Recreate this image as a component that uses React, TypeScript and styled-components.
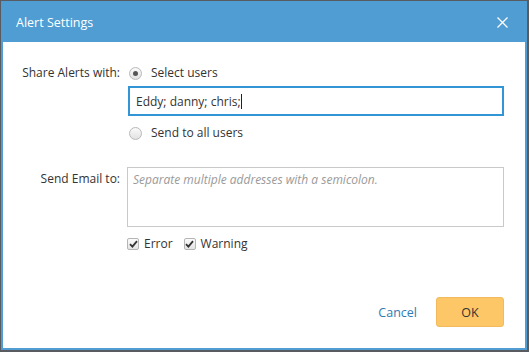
import React from "react";
import styled, { createGlobalStyle } from "styled-components";

const GlobalStyle = createGlobalStyle`
  html, body {
    margin: 0;
    padding: 0;
    background: #585c60;
    height: 352px;
    overflow: hidden;
  }
  body {
    font-family: "Open Sans", "Liberation Sans", sans-serif;
    font-size: 12px;
    color: #333;
  }
`;

const Dialog = styled.div`
  box-sizing: border-box;
  margin: 1px 0 0 1px;
  width: 526px;
  height: 349px;
  border: 2px solid #4f9dd2;
  background: #fff;
  display: flex;
  flex-direction: column;
`;

const Header = styled.div`
  height: 39px;
  background: #4f9dd2;
  display: flex;
  align-items: center;
  justify-content: space-between;
  padding: 0 17px 0 13px;
  color: #fff;
  font-size: 12.5px;
`;

const CloseButton = styled.button`
  border: 0;
  background: none;
  padding: 0;
  width: 11px;
  height: 11px;
  display: flex;
  cursor: pointer;
`;

const Content = styled.div`
  flex: 1;
  display: grid;
  grid-template-columns: 117px 1fr;
  column-gap: 7px;
  align-content: start;
  padding: 22px 21px 0 0;
`;

const Label = styled.div<{ $top?: number }>`
  text-align: right;
  line-height: 18px;
  padding-top: ${(p) => p.$top ?? 0}px;
`;

const Field = styled.div<{ $top?: number }>`
  display: flex;
  flex-direction: column;
  margin-top: ${(p) => p.$top ?? 0}px;
`;

const Option = styled.label`
  display: flex;
  align-items: center;
  gap: 9px;
  height: 18px;
  line-height: 18px;
  margin-left: 1px;
`;

const Radio = styled.span<{ $checked?: boolean }>`
  box-sizing: border-box;
  width: 13px;
  height: 13px;
  border-radius: 50%;
  border: 1px solid #b9b9b9;
  background: linear-gradient(#fafafa, #e2e2e2);
  display: flex;
  align-items: center;
  justify-content: center;
  margin-left: 1px;
  &::after {
    content: "";
    width: 5px;
    height: 5px;
    border-radius: 50%;
    background: ${(p) => (p.$checked ? "#555" : "transparent")};
  }
`;

const TextInput = styled.div`
  box-sizing: border-box;
  height: 30px;
  margin: 4px 0 8px 1px;
  border: 2px solid #3195d6;
  display: flex;
  align-items: center;
  padding: 0 6px;
  color: #333;
`;

const Caret = styled.span`
  display: inline-block;
  width: 1px;
  height: 15px;
  background: #222;
  vertical-align: middle;
`;

const TextArea = styled.div`
  box-sizing: border-box;
  height: 60px;
  border: 1px solid #c9c9c9;
  padding: 3px 5px;
  line-height: 18px;
  color: #9a9a9a;
  font-style: italic;
`;

const Checks = styled.div`
  display: flex;
  gap: 11px;
  margin-top: 8px;
`;

const CheckItem = styled.label`
  display: flex;
  align-items: center;
  gap: 5px;
  line-height: 18px;
`;

const Box = styled.span`
  box-sizing: border-box;
  width: 12px;
  height: 12px;
  border: 1px solid #b5b5b5;
  border-radius: 2px;
  background: linear-gradient(#fbfbfb, #e4e4e4);
  display: flex;
  align-items: center;
  justify-content: center;
`;

const Footer = styled.div`
  display: flex;
  justify-content: flex-end;
  align-items: center;
  gap: 19px;
  padding: 0 21px 21px 0;
`;

const LinkButton = styled.button`
  border: 0;
  background: none;
  padding: 0;
  font: inherit;
  font-size: 12.5px;
  color: #2e7bb4;
  cursor: pointer;
`;

const PrimaryButton = styled.button`
  box-sizing: border-box;
  width: 68px;
  height: 30px;
  border: 1px solid #f1ba5c;
  border-radius: 3px;
  background: #fdc667;
  font: inherit;
  font-size: 12.5px;
  color: #333;
  cursor: pointer;
`;

const Check = () => (
  <svg width="9" height="8" viewBox="0 0 9 8">
    <path d="M1 4.2 L3.4 6.6 L8 1.2" stroke="#333" strokeWidth="1.8" fill="none" />
  </svg>
);

export default function App() {
  return (
    <>
      <GlobalStyle />
      <Dialog>
        <Header>
          <span>Alert Settings</span>
          <CloseButton aria-label="Close">
            <svg width="11" height="11" viewBox="0 0 11 11">
              <path d="M0.5 0.5 L10.5 10.5 M10.5 0.5 L0.5 10.5" stroke="#fff" strokeWidth="1.3" />
            </svg>
          </CloseButton>
        </Header>
        <Content>
          <Label>Share Alerts with:</Label>
          <Field>
            <Option>
              <Radio $checked />
              Select users
            </Option>
            <TextInput>
              Eddy; danny; chris;
              <Caret />
            </TextInput>
            <Option>
              <Radio />
              Send to all users
            </Option>
          </Field>
          <Label $top={28}>Send Email to:</Label>
          <Field $top={25}>
            <TextArea>Separate multiple addresses with a semicolon.</TextArea>
            <Checks>
              <CheckItem>
                <Box>
                  <Check />
                </Box>
                Error
              </CheckItem>
              <CheckItem>
                <Box>
                  <Check />
                </Box>
                Warning
              </CheckItem>
            </Checks>
          </Field>
        </Content>
        <Footer>
          <LinkButton>Cancel</LinkButton>
          <PrimaryButton>OK</PrimaryButton>
        </Footer>
      </Dialog>
    </>
  );
}
